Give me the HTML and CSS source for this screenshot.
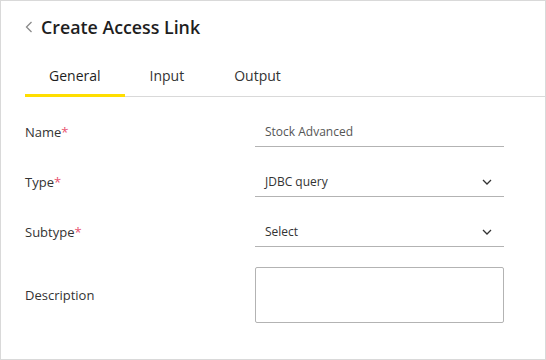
FILE: index.html
```html
<!DOCTYPE html>
<html lang="en">
<head>
    <meta charset="UTF-8">
    <meta name="viewport" content="width=device-width, initial-scale=1.0">
    <title>Create Access Link</title>
    <link rel="stylesheet" href="styles.css">
</head>
<body>
    <div class="panel">
        <div class="header">
            <a href="#" class="back-btn">
                <svg width="8" height="12" viewBox="0 0 8 12"><path d="M6.5 1 L1.5 6 L6.5 11" fill="none" stroke="#8a8a8a" stroke-width="1.3"/></svg>
            </a>
            <h1>Create Access Link</h1>
        </div>
        <div class="tabs">
            <div class="tab active">General</div>
            <div class="tab">Input</div>
            <div class="tab">Output</div>
        </div>
        <div class="form">
            <div class="row">
                <label>Name<span class="req">*</span></label>
                <div class="field">Stock Advanced</div>
            </div>
            <div class="row">
                <label>Type<span class="req">*</span></label>
                <div class="field select">
                    <span>JDBC query</span>
                    <svg width="10" height="6" viewBox="0 0 10 6"><path d="M1 1 L5 5 L9 1" fill="none" stroke="#333" stroke-width="1.3"/></svg>
                </div>
            </div>
            <div class="row">
                <label>Subtype<span class="req">*</span></label>
                <div class="field select">
                    <span>Select</span>
                    <svg width="10" height="6" viewBox="0 0 10 6"><path d="M1 1 L5 5 L9 1" fill="none" stroke="#333" stroke-width="1.3"/></svg>
                </div>
            </div>
            <div class="row">
                <label>Description</label>
                <div class="textarea"></div>
            </div>
        </div>
    </div>
</body>
</html>
```

FILE: styles.css
```css
body {
    font-family: 'Open Sans', 'Liberation Sans', sans-serif;
    margin: 0;
    padding: 0;
    background: white;
    color: #333;
}
.panel {
    width: 544px;
    height: 358px;
    border: 1px solid #d9d9d9;
    background: white;
}
.header {
    display: flex;
    align-items: center;
    padding: 12px 24px 0;
    height: 28px;
}
.back-btn {
    display: flex;
    align-items: center;
    width: 16px;
    height: 28px;
}
.header h1 {
    margin: 0;
    font-size: 17.8px;
    font-weight: 600;
    color: #1e1e1e;
}
.tabs {
    display: flex;
    margin: 15px 0 0 24px;
    border-bottom: 1px solid #d9d9d9;
}
.tab {
    padding: 10px 25px 8px;
    font-size: 14px;
    line-height: 20px;
    color: #333;
    border-bottom: 3px solid transparent;
    margin-bottom: -1px;
    cursor: pointer;
}
.tab.active {
    border-bottom-color: #ffde00;
    color: #1e1e1e;
    font-weight: 500;
    padding: 10px 24px 8px;
}
.form {
    padding: 20px 41px 0 24px;
    display: flex;
    flex-direction: column;
    gap: 20px;
}
.row {
    display: flex;
    align-items: center;
}
.row label {
    width: 230px;
    font-size: 13px;
    color: #333;
}
.req {
    color: #e8536f;
}
.field {
    flex: 1;
    height: 29px;
    border-bottom: 1px solid #b3b3b3;
    display: flex;
    align-items: center;
    justify-content: space-between;
    padding: 0 12px 0 10px;
    font-size: 12px;
    color: #555;
}
.field.select {
    color: #333;
}
.textarea {
    flex: 1;
    height: 54px;
    border: 1px solid #b3b3b3;
    border-radius: 2px;
}
```
